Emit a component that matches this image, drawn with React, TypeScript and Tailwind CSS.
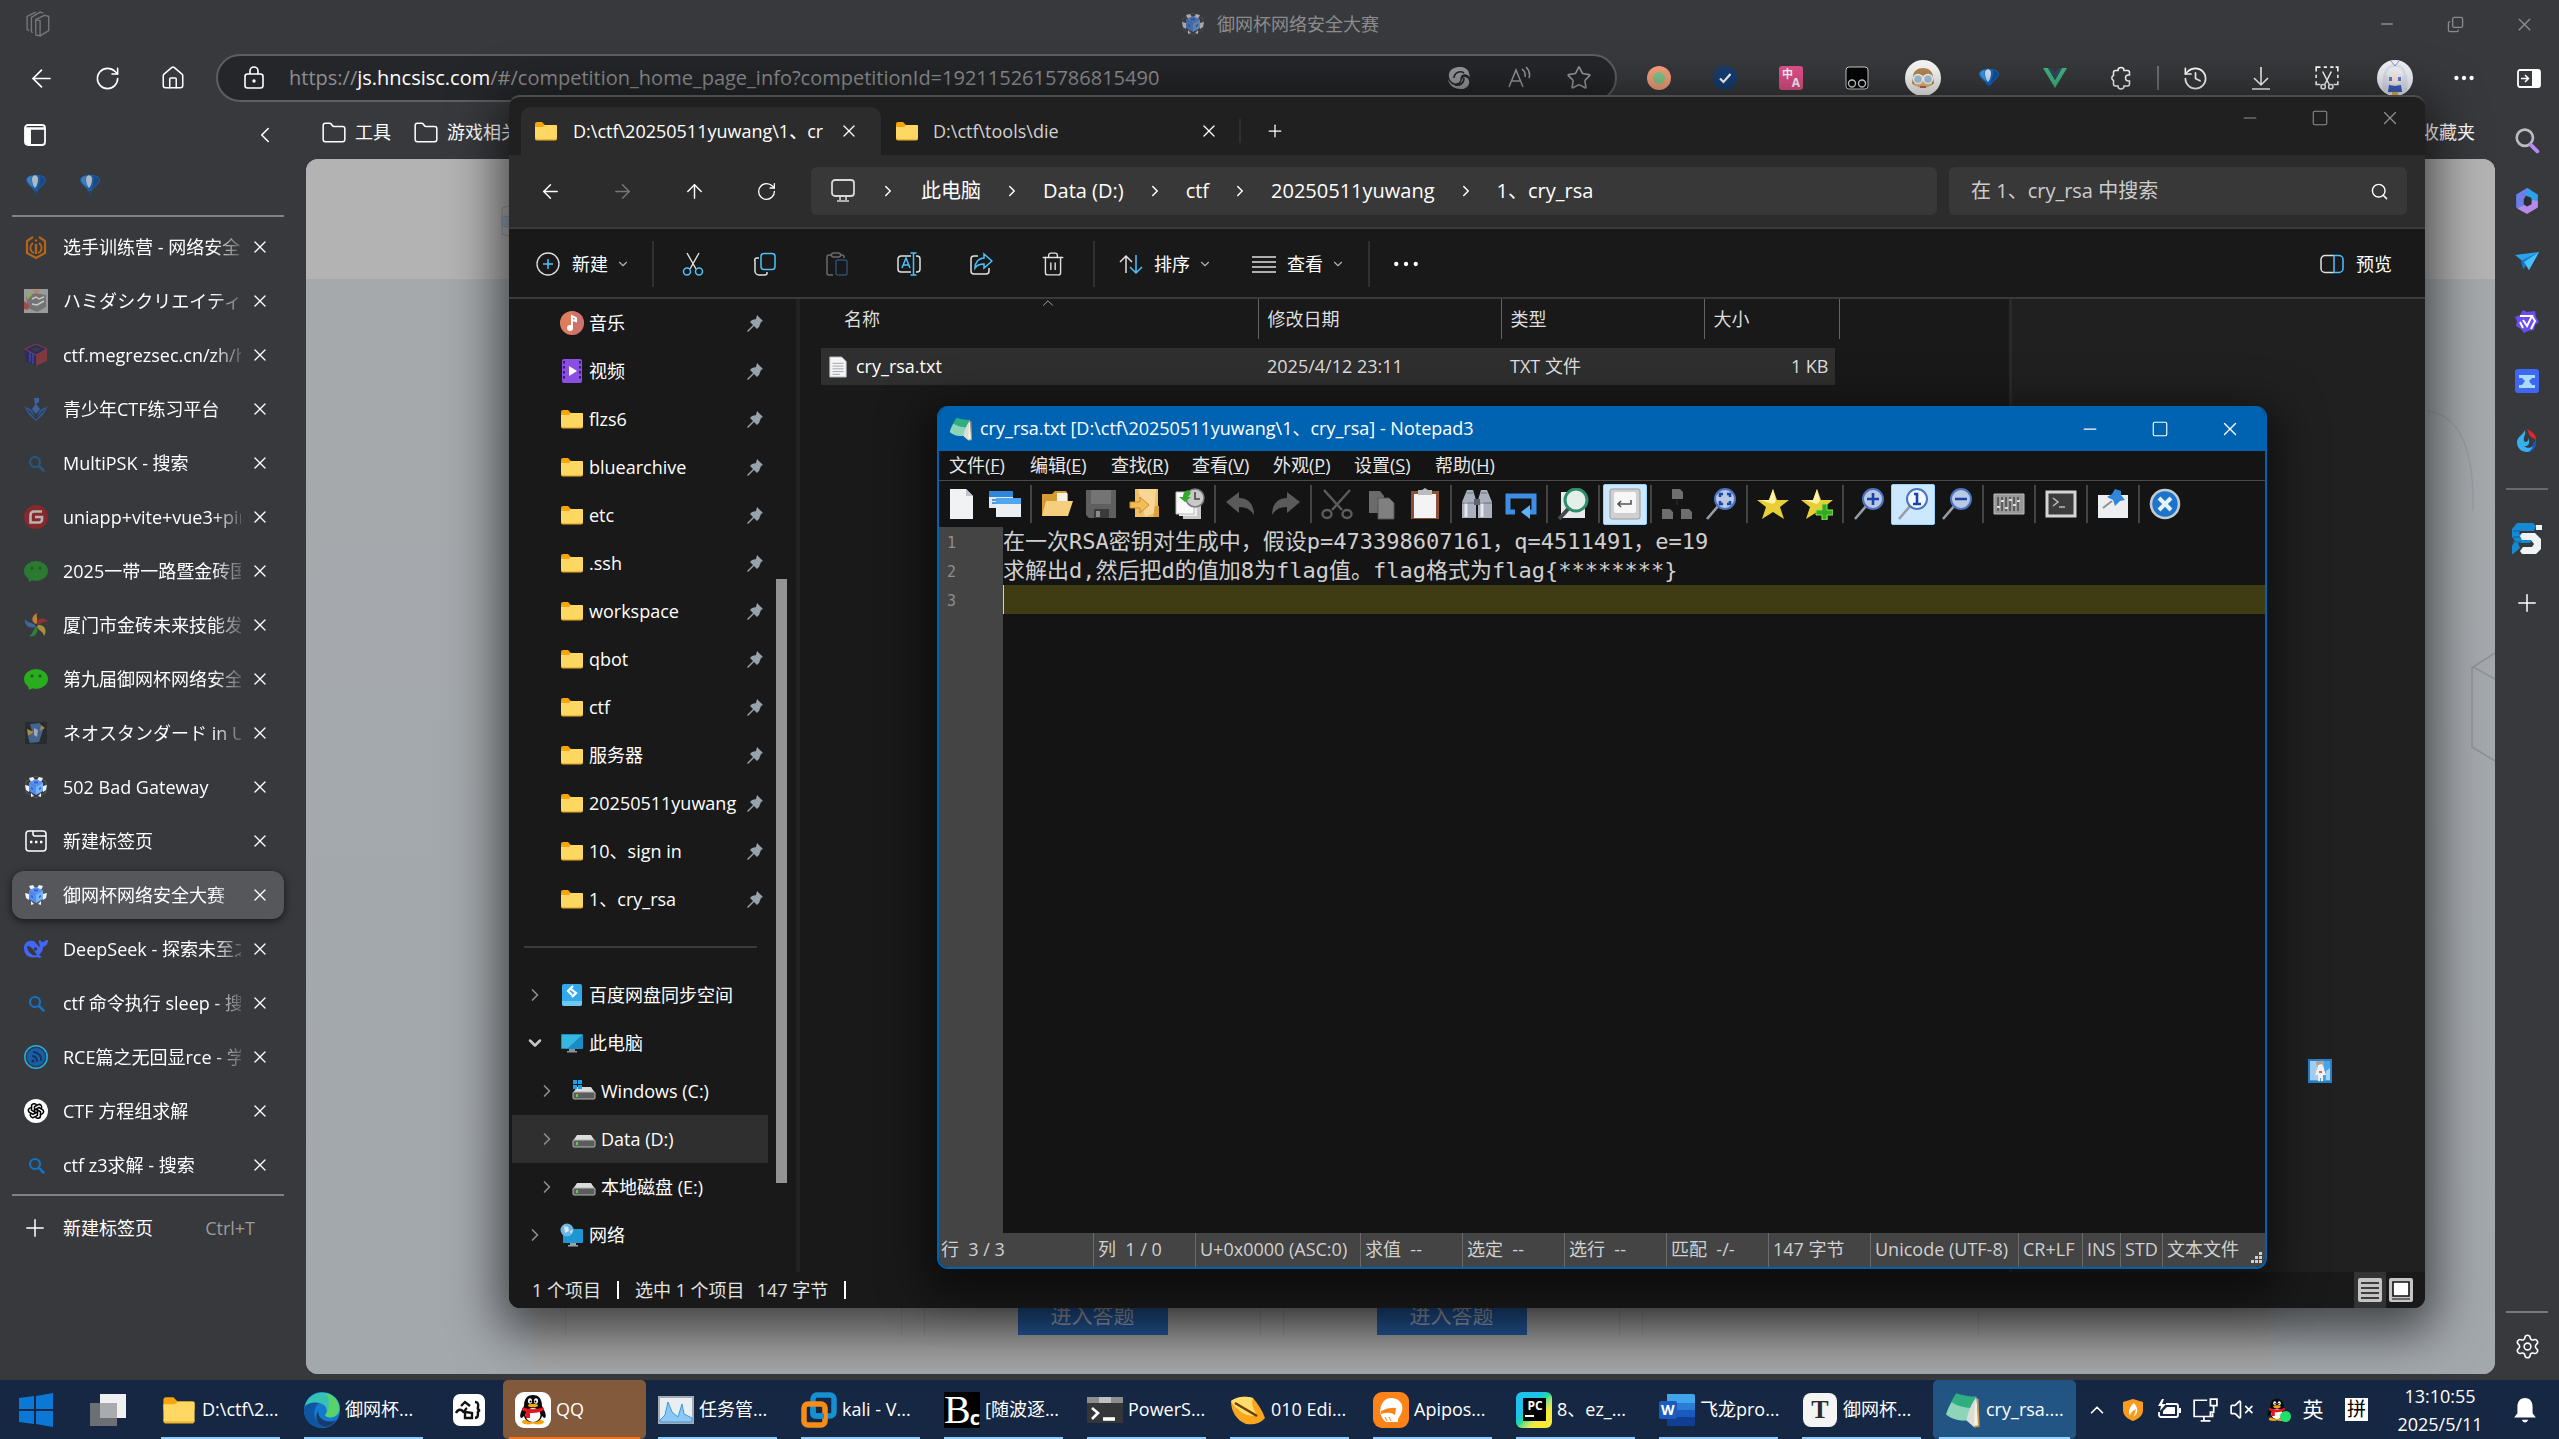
import type { ReactNode } from 'react'
import {
  ArrowLeft,
  ArrowRight,
  ArrowUp,
  ChevronDown,
  ChevronLeft,
  ChevronRight,
  ChevronUp,
  Copy,
  Ellipsis,
  Folder,
  History,
  House,
  Minus,
  Plus,
  RotateCw,
  Search,
  Settings,
  Square,
  Star,
  Trash2,
  VolumeX,
  X,
} from 'lucide-react'
import { TbBrandOpenai } from 'react-icons/tb'

const UI = "font-['Open_Sans','Noto_Sans_CJK_SC',sans-serif]"

function Svg({ size = 24, box = 24, children }: { size?: number; box?: number; children: ReactNode }) {
  return (
    <svg width={size} height={size} viewBox={`0 0 ${box} ${box}`} fill="none" className="shrink-0" aria-hidden="true">
      {children}
    </svg>
  )
}

/* ---------- shared icons ---------- */

function FolderIcon({ size = 24 }: { size?: number }) {
  return (
    <Svg size={size}>
      <path d="M1 5a2 2 0 0 1 2-2h5l3 3h10a2 2 0 0 1 2 2v4H1z" fill="#f5a60f" />
      <path d="M1 8h8l2-2h11a1 1 0 0 1 1 1v12a2 2 0 0 1-2 2H3a2 2 0 0 1-2-2z" fill="#ffd864" />
      <path d="M1 18v1.500a2 2 0 0 0 2 2h18a2 2 0 0 0 2-2V18a2 2 0 0 1-2 2H3a2 2 0 0 1-2-2z" fill="#f0b52e" />
    </Svg>
  )
}

function Balloon({ dim = false }: { dim?: boolean }) {
  return (
    <Svg>
      <g opacity={dim ? 0.75 : 1}>
        <path d="M2 8C2 1 22 1 22 8c0 4-6 7-9 12h-2C8 15 2 12 2 8z" fill="#1668c4" />
        <path d="M8 7c0-5 6-5 6 0 0 3-1 7-3 9-2-2-3-6-3-9z" fill="#d5e6f5" />
        <path d="M3 7c1-2 3-3 5-3-1 4 0 8 2 12-3-3-7-5-7-9z" fill="#3f96e6" />
        <path d="M16 4c3 1 5 2 5 4 0 3-5 6-8 10 2-4 4-9 3-14z" fill="#124f96" />
        <path d="M11 19h2v4h-2z" fill="#124c8e" />
      </g>
    </Svg>
  )
}

function CubeLogo({ size = 24 }: { size?: number }) {
  return (
    <Svg size={size}>
      <path d="M12 1l10 5.500v11L12 23 2 17.500v-11z" stroke="#55585f" />
      <path d="M5 3l4-1 2 3-4 2zM19 3l-4-1-2 3 4 2zM1 10l4 1v6l-3-2zM23 10l-4 1v6l3-2zM7 18l3 3-3 1zM17 18l-3 3 3 1z" fill="#eef2f8" />
      <path d="M12 4l7 3.500-7 4-7-4z" fill="#5b93f3" />
      <path d="M5 7.500l7 4V20l-7-4z" fill="#4f8df0" />
      <path d="M19 7.500l-7 4V20l7-4z" fill="#73b4f8" />
      <path d="M10 6.500h4v2h-4zM7 12l2 1v2l-2-1zM15 13l2-1v2l-2 1z" fill="#2f62d8" />
    </Svg>
  )
}

function BingSearch({ color = '#1272c4' }: { color?: string }) {
  return (
    <Svg>
      <circle cx="11" cy="11" r="5" stroke={color} strokeWidth="2.200" />
      <path d="M15 15l4.500 4.500" stroke={color} strokeWidth="2.600" strokeLinecap="round" />
    </Svg>
  )
}

function Wechat({ color }: { color: string }) {
  return (
    <Svg>
      <ellipse cx="12" cy="12" rx="12" ry="10" fill={color} />
      <path d="M4 18l1 5 6-3z" fill={color} />
      <circle cx="8" cy="9" r="1.500" fill="#1e5a25" />
      <circle cx="16" cy="9" r="1.500" fill="#1e5a25" />
    </Svg>
  )
}

function Penguin({ size = 32 }: { size?: number }) {
  return (
    <Svg size={size} box={32}>
      <ellipse cx="11" cy="28" rx="6" ry="2.500" fill="#f5a50a" />
      <ellipse cx="21" cy="28" rx="6" ry="2.500" fill="#f5a50a" />
      <path d="M7 12C7 4 11 1 16 1s9 3 9 11c3 5 5 10 3 12-1 0-2-1-3-2-1 4-4 6-9 6s-8-2-9-6c-1 1-2 2-3 2-2-2 0-7 3-12z" fill="#0b0b0b" />
      <ellipse cx="16" cy="21" rx="7.500" ry="7" fill="#fff" />
      <ellipse cx="13" cy="7" rx="2" ry="2.800" fill="#fff" />
      <ellipse cx="19" cy="7" rx="2" ry="2.800" fill="#fff" />
      <circle cx="13.500" cy="7.500" r="1" fill="#000" />
      <circle cx="18.500" cy="7.500" r="1" fill="#000" />
      <ellipse cx="16" cy="11.500" rx="5" ry="1.800" fill="#f7a80d" />
      <path d="M6 13c6 3 14 3 20 0l1 3c-5 3-10 3-14 3v5H9v-6l-4-2z" fill="#e4161f" />
    </Svg>
  )
}

function Notebook({ size = 24 }: { size?: number }) {
  return (
    <Svg size={size} box={32}>
      <path d="M28 5l2 25-4 1-7-6z" fill="#f3f1e6" />
      <path d="M10 1c6 2 12 3 18 3-5 7-7 13-9 21C12 26 6 24 1 20 3 13 6 7 10 1z" fill="#2fae80" />
      <path d="M6 9c6 4 12 5 19 5-3 4-5 8-6 11C12 26 6 24 1 20 2 16 4 12 6 9z" fill="#8ed4b8" />
      <path d="M28 4c-5 7-7 13-9 21l7 6c0-9 0-18 2-27z" fill="#d9ddd6" />
      <path d="M29 6l1 24-4 1" stroke="#c79a52" strokeWidth="1.500" />
    </Svg>
  )
}

/* ---------- browser ---------- */

const favicons: Record<string, ReactNode> = {
  camp: (
    <Svg>
      <path d="M9 2L3 6v12l9 5 9-5V6l-6-4" stroke="#b3651a" strokeWidth="2.200" />
      <path d="M9 8c-4 3-3 9 1 10M15 8c4 3 3 9-1 10" stroke="#b3651a" strokeWidth="1.800" />
      <path d="M12 9v10M12 4.500v2" stroke="#b3651a" strokeWidth="2.400" />
    </Svg>
  ),
  hami: (
    <Svg>
      <path d="M0 0h24v24H0z" fill="#9b9b9b" />
      <path d="M2 8l9-4 11 2v12l-9 5-9-4z" fill="#747474" />
      <path d="M3 3l5 3-5 5z" fill="#8fae55" />
      <path d="M8 1h8l-3 4z" fill="#c08054" />
      <path d="M0 12l5 4-1 5-4-1z" fill="#a94a4a" />
      <path d="M8 10l4-2 3 2 5-2M8 15l5 1 7-4" stroke="#c8c8c8" strokeWidth="1.500" />
    </Svg>
  ),
  megrez: (
    <Svg>
      <path d="M12 1l11 5v12l-11 5L1 18V6z" fill="#2c2c62" />
      <path d="M12 12l11-6v12l-11 5z" fill="#7c3a3f" />
      <path d="M12 1l11 5-11 6L1 6z" stroke="#883e45" />
      <path d="M6 9v10M9 10v11" stroke="#4545a0" strokeWidth="1.500" />
      <path d="M12 4l6 2-6 3-6-3z" fill="#3a3b3e" />
    </Svg>
  ),
  youth: (
    <Svg>
      <path d="M0 9l8 4 4 9 4-9 8-4-5 9-7 6-7-6z" fill="#33568e" />
      <path d="M10 1h5v4l-3 2 4 5-4 5-4-5 3-4z" fill="#3d63a2" />
      <path d="M4 13l8 9 8-9" stroke="#26324a" />
    </Svg>
  ),
  bingDim: <BingSearch color="#265884" />,
  gitee: (
    <Svg>
      <circle cx="12" cy="12" r="12" fill="#86282c" />
      <path d="M18 6.500H10A3.500 3.500 0 0 0 6.500 10v7.500H15a3 3 0 0 0 3-3V12h-7" stroke="#b9b4b4" strokeWidth="2.600" />
    </Svg>
  ),
  wechatDim: <Wechat color="#2a7a31" />,
  swirl: (
    <Svg>
      <path d="M12 11C7 9 7 3 13 0c-1 3 1 5 0 10z" fill="#bf8136" />
      <path d="M13 11c0-6 7-8 11-2-4-1-6 1-10 3z" fill="#8d3436" />
      <path d="M14 12c6-1 10 5 6 11-1-5-5-5-7-9z" fill="#a9903a" />
      <path d="M13 14c2 6-3 11-8 9 4-2 4-6 7-10z" fill="#357c40" />
      <path d="M11 14C5 16 0 12 1 6c2 4 6 3 10 6z" fill="#3a6a9c" />
    </Svg>
  ),
  wechat: <Wechat color="#2aac1f" />,
  neo: (
    <Svg>
      <path d="M1 1h22v22H1z" fill="#2a2b2d" />
      <path d="M6 3l10-1 3 7-4 12-9 1-2-6 4-6z" fill="#42648f" />
      <path d="M3 8l7 3-6 4zM17 4l4 3-5 3z" fill="#a38b48" />
      <path d="M10 7l4 2-1 7-3-2z" fill="#a3a8b0" />
    </Svg>
  ),
  cube: <CubeLogo />,
  newtab: (
    <Svg>
      <rect x="2" y="2" width="20" height="20" rx="3" stroke="#fff" strokeWidth="1.500" />
      <path d="M9 2v3q0 2 2 2h11" stroke="#fff" strokeWidth="1.500" />
      <path d="M6 13h2.400M11 13h2.400M16 13h2.400" stroke="#fff" strokeWidth="2.400" />
    </Svg>
  ),
  deepseek: (
    <Svg>
      <path
        d="M0 11C0 6 4 3 9 4c1 0 2 0 2 1 0 1 2 1 4 5 1 0 1-2 0-4-1-2 0-3 1-3 1 2 3 3 5 1 1-1 2-1 3-1 0 4-2 6-5 7 0 4-2 6-4 8l3 2c-2 1-4 1-5 0C5 22 0 18 0 11z"
        fill="#4266f5"
      />
      <path d="M3 9c4 0 6 3 10 9-4 2-10-3-10-9z" fill="#38393c" />
      <circle cx="11.500" cy="12" r="1.800" fill="#38393c" />
    </Svg>
  ),
  bing: <BingSearch />,
  rce: (
    <Svg>
      <circle cx="12" cy="12" r="11.200" stroke="#1fb0e8" strokeWidth="1.500" />
      <circle cx="12" cy="12" r="9" fill="#145fae" />
      <circle cx="9" cy="16" r="1.600" fill="#1b3152" />
      <path d="M8 11c3 0 5 2 5 6M9 7c5 0 9 4 8 9" stroke="#1b3152" strokeWidth="1.800" />
    </Svg>
  ),
  openai: (
    <span className="flex size-6 shrink-0 items-center justify-center rounded-full bg-white text-black">
      <TbBrandOpenai size={18} />
    </span>
  ),
}

const tabs = [
  { icon: 'camp', title: '选手训练营 - 网络安全' },
  { icon: 'hami', title: 'ハミダシクリエイティ' },
  { icon: 'megrez', title: 'ctf.megrezsec.cn/zh/ho' },
  { icon: 'youth', title: '青少年CTF练习平台' },
  { icon: 'bingDim', title: 'MultiPSK - 搜索' },
  { icon: 'gitee', title: 'uniapp+vite+vue3+pin' },
  { icon: 'wechatDim', title: '2025一带一路暨金砖国' },
  { icon: 'swirl', title: '厦门市金砖未来技能发' },
  { icon: 'wechat', title: '第九届御网杯网络安全' },
  { icon: 'neo', title: 'ネオスタンダード in U' },
  { icon: 'cube', title: '502 Bad Gateway' },
  { icon: 'newtab', title: '新建标签页' },
  { icon: 'cube', title: '御网杯网络安全大赛', active: true },
  { icon: 'deepseek', title: 'DeepSeek - 探索未至之' },
  { icon: 'bing', title: 'ctf 命令执行 sleep - 搜' },
  { icon: 'rce', title: 'RCE篇之无回显rce - 学' },
  { icon: 'openai', title: 'CTF 方程组求解' },
  { icon: 'bing', title: 'ctf z3求解 - 搜索' },
]

const extensions: { name: string; icon: ReactNode }[] = [
  {
    name: 'FeHelper',
    icon: (
      <Svg>
        <circle cx="12" cy="12" r="12" fill="#f7a27c" />
        <circle cx="12" cy="12" r="6" fill="#84c98d" />
      </Svg>
    ),
  },
  {
    name: 'Todo',
    icon: (
      <Svg>
        <circle cx="12" cy="12" r="12" fill="#173f74" />
        <path d="M7 12.500l3.500 3.500 7-8" stroke="#fff" strokeWidth="2.200" />
      </Svg>
    ),
  },
  {
    name: '翻译',
    icon: (
      <span className="relative size-6 rounded-[3px] bg-[#e4508c] text-white">
        <span className="absolute left-[3px] top-[1px] text-[11px] font-bold leading-[13px]">中</span>
        <span className="absolute bottom-[1px] right-[3px] text-[12px] font-bold leading-[12px]">A</span>
      </span>
    ),
  },
  {
    name: 'Tampermonkey',
    icon: (
      <Svg>
        <rect x="1" y="1" width="22" height="22" rx="3" fill="#050505" stroke="#d0d0d0" />
        <circle cx="7" cy="17.500" r="3.500" stroke="#d8d8d8" strokeWidth="1.400" />
        <circle cx="17" cy="17.500" r="3.500" stroke="#d8d8d8" strokeWidth="1.400" />
      </Svg>
    ),
  },
  {
    name: '篡改猴',
    icon: (
      <Svg size={36} box={36}>
        <circle cx="18" cy="18" r="18" fill="#fbfbfa" />
        <path d="M8 17c0-12 20-12 20 0l1 6c-3 5-19 5-22 0z" fill="#b98a54" />
        <path d="M9 15h18v9c-2 5-16 5-18 0z" fill="#efb883" />
        <circle cx="13" cy="19" r="4.500" fill="#a7cbe0" stroke="#fff" strokeWidth="1.500" />
        <circle cx="23" cy="19" r="4.500" fill="#a7cbe0" stroke="#fff" strokeWidth="1.500" />
        <path d="M15 27h6" stroke="#a4483a" strokeWidth="1.500" />
      </Svg>
    ),
  },
  { name: 'Balloon', icon: <Balloon /> },
  {
    name: 'Vue Devtools',
    icon: (
      <Svg>
        <path d="M0 2h5l7 12 7-12h5L12 22z" fill="#41b883" />
        <path d="M5 2h4l3 5 3-5h4l-7 12z" fill="#35495e" />
      </Svg>
    ),
  },
  {
    name: '扩展',
    icon: (
      <Svg>
        <path
          d="M9 4.500a3 3 0 0 1 6 0h3.500a2 2 0 0 1 2 2V9h-1a3 3 0 0 0 0 6h1v3a2 2 0 0 1-2 2H15a3 3 0 0 1-6 0H6.500a2 2 0 0 1-2-2v-3.500a2.700 2.700 0 0 1 0-5V6.500a2 2 0 0 1 2-2z"
          stroke="#fff"
          strokeWidth="1.500"
        />
      </Svg>
    ),
  },
]

const sideApps: { name: string; icon: ReactNode }[] = [
  {
    name: '搜索',
    icon: (
      <Svg size={26}>
        <circle cx="10" cy="9" r="7.500" stroke="#b9bcc0" strokeWidth="2.400" />
        <path d="M15.500 15.500l6 6" stroke="#b78af2" strokeWidth="3.600" strokeLinecap="round" />
      </Svg>
    ),
  },
  {
    name: 'Microsoft 365',
    icon: (
      <Svg size={26}>
        <path d="M12 0l4 2-6 6v8l-3 5-5-3V6z" fill="#6c7ee8" />
        <path d="M12 0l10 6v11l-6-3V9l-5-2z" fill="#2ea1ea" />
        <path d="M22 12v6l-10 6-9-5 6-3 7-1 1-4z" fill="#b58bea" />
        <path d="M12 8l4 2v5l-4 2-3-2v-5z" fill="#2b2d33" />
      </Svg>
    ),
  },
  {
    name: 'Drop',
    icon: (
      <Svg>
        <path d="M0 6l24-3-10 18-4-7z" fill="#2aa3ee" />
        <path d="M24 3L6 12l2 8 5-5z" fill="#1479c4" />
        <path d="M24 3L9 13l5 8z" fill="#49c0f8" />
      </Svg>
    ),
  },
  {
    name: '通义',
    icon: (
      <Svg>
        <path d="M8 1l4 2 8-1 1 6 3 5-4 3-1 5-6 1-4 2-3-4-5-3 1-5-2-4 5-2z" fill="#6a4df0" />
        <path d="M5 7h12l-5 10-4-6M17 7l3 5-4 8M5 13l3 6" stroke="#fff" strokeWidth="2" />
      </Svg>
    ),
  },
  {
    name: '讯飞',
    icon: (
      <Svg>
        <rect width="24" height="24" rx="3" fill="#3e68f2" />
        <path d="M4 6h16v3h-3l-3 3 3 4h3v3H4v-3h3l3-4-3-3H4z" fill="#a9dcfb" />
      </Svg>
    ),
  },
  {
    name: 'Flame',
    icon: (
      <Svg>
        <path d="M10 1c1 5-2 7-1 11 1 2 5 1 4-3 3 5 0 9-4 8 6 5 12-1 11-7 2 7-2 13-8 13S2 19 2 13c0-5 6-7 8-12z" fill="#35b1f2" />
        <path d="M12 0c6 3 9 6 9 11l-6-4z" fill="#e3262b" />
        <path d="M21 12c1 6-3 11-8 11 4-2 5-5 5-10z" fill="#1a53be" />
      </Svg>
    ),
  },
]

function IconCell({ label, wide = false, children }: { label: string; wide?: boolean; children: ReactNode }) {
  return (
    <button type="button" aria-label={label} className={`flex h-12 shrink-0 items-center justify-center ${wide ? 'w-[69px]' : 'w-[66px]'}`}>
      {children}
    </button>
  )
}

function BrowserTitle() {
  return (
    <header className="flex h-12 shrink-0 items-center text-[#8b8c8e]">
      <button type="button" aria-label="工作区" className="flex w-[78px] items-center justify-center">
        <Svg size={26}>
          <path d="M9 8l8-4 4 1v13l-8 5-4-1zM9 8l4 1v14M6 20l-1-1V6l8-5 3 1M3 18l-2-1V5l8-4" stroke="#75767a" strokeWidth="1.300" />
        </Svg>
      </button>
      <div className="flex flex-1 items-center justify-center gap-3 pl-[130px] text-[18px]">
        <span className="opacity-60">
          <CubeLogo />
        </span>
        <h1>御网杯网络安全大赛</h1>
      </div>
      <IconCell label="最小化" wide>
        <Minus size={18} strokeWidth={2} />
      </IconCell>
      <IconCell label="还原" wide>
        <Copy size={17} strokeWidth={1.800} className="-scale-y-100" />
      </IconCell>
      <IconCell label="关闭" wide>
        <X size={21} strokeWidth={1.600} />
      </IconCell>
    </header>
  )
}

function BrowserToolbar() {
  return (
    <div className="flex h-[60px] shrink-0 items-center pl-2 text-white">
      <IconCell label="后退">
        <ArrowLeft size={29} strokeWidth={1.400} />
      </IconCell>
      <IconCell label="刷新">
        <RotateCw size={27} strokeWidth={1.400} />
      </IconCell>
      <IconCell label="主页">
        <House size={26} strokeWidth={1.400} />
      </IconCell>
      <div className="ml-[10px] flex h-12 min-w-0 flex-1 items-center rounded-full border-2 border-[#5d5e61] bg-[#252629] pl-6 pr-[6px]">
        <Svg size={24}>
          <rect x="3" y="8" width="18" height="14" rx="2.500" stroke="#fff" strokeWidth="1.600" />
          <path d="M8 8V5a4 4 0 0 1 8 0v3" stroke="#fff" strokeWidth="1.600" />
          <circle cx="12" cy="15" r="1.700" fill="#fff" />
        </Svg>
        <div role="textbox" aria-label="地址" className="ml-[23px] flex-1 truncate text-[20px] text-[#8d8e90]">
          https://<span className="text-white">js.hncsisc.com</span>
          /#/competition_home_page_info?competitionId=1921152615786815490
        </div>
        <button type="button" aria-label="应用" className="flex w-[60px] justify-center">
          <Svg>
            <path d="M2 8C3 0 20-2 22 7l1 5c-1-3-5-5-8-3-3 3 0 6-4 8C6 19 1 14 2 8z" fill="#97989b" />
            <path d="M1 13c2 4 5 7 10 6 5-2 2-7 7-8 7 2 5 12-4 12-6 0-12-3-13-10z" fill="#97989b" />
            <path d="M7 12c0-5 6-8 10-5M17 12c0 5-4 8-9 7" stroke="#252629" strokeWidth="1.600" />
          </Svg>
        </button>
        <button type="button" aria-label="朗读" className="flex w-[60px] justify-center">
          <Svg>
            <path d="M2 21L9 4l7 17M4.500 15h9M15 3q4 3 3 8M19 1q5 5 3 11" stroke="#97989b" strokeWidth="1.500" />
          </Svg>
        </button>
        <button type="button" aria-label="收藏" className="flex w-[60px] justify-center text-[#97989b]">
          <Star size={26} strokeWidth={1.500} />
        </button>
      </div>
      <div className="ml-[9px] flex items-center">
        {extensions.map((ext) => (
          <IconCell key={ext.name} label={ext.name}>
            {ext.icon}
          </IconCell>
        ))}
        <span className="mx-[3px] h-6 w-[2px] bg-[#707174]" />
        <IconCell label="历史记录">
          <History size={27} strokeWidth={1.500} />
        </IconCell>
        <IconCell label="下载">
          <Svg>
            <path d="M12 1v17M5 12l7 7 7-7M3 23h18" stroke="#fff" strokeWidth="1.500" />
          </Svg>
        </IconCell>
        <IconCell label="截图">
          <Svg size={26}>
            <path d="M2 6V2h4M9 2h3M15 2h3M22 6V2h-2M22 9v3M22 15v3h-4M2 9v3M2 15v3h4" stroke="#fff" strokeWidth="1.500" />
            <path d="M8 6l6 12M16 6l-6 12" stroke="#fff" strokeWidth="1.400" />
            <circle cx="8.500" cy="20" r="2" stroke="#fff" strokeWidth="1.400" />
            <circle cx="15.500" cy="20" r="2" stroke="#fff" strokeWidth="1.400" />
          </Svg>
        </IconCell>
        <IconCell label="个人资料" wide>
          <Svg size={36} box={36}>
            <circle cx="18" cy="18" r="18" fill="#f3f4fa" />
            <path d="M6 30C4 18 7 4 18 4s14 14 12 26l-6 4H12z" fill="#dfe4f3" />
            <path d="M11 15c0-6 14-6 14 0v5c-2 6-12 6-14 0z" fill="#fdf0ec" />
            <path d="M9 17c1-9 5-10 9-10s8 1 9 10l-4-5-2 4-3-5-3 5-2-4z" fill="#f3f5fc" />
            <path d="M12 17h3v4h-3zM21 17h3v4h-3z" fill="#5d83cf" />
            <path d="M14 1l4 5M22 1l-4 5" stroke="#8d9bb8" />
            <path d="M12 25l6 1 6-1 1 7H11z" fill="#3f62c0" />
            <path d="M15 32h6v3h-6z" fill="#e5b44c" />
          </Svg>
        </IconCell>
        <IconCell label="设置及其他" wide>
          <Ellipsis size={26} strokeWidth={2} />
        </IconCell>
        <button type="button" aria-label="侧栏" className="flex w-[61px] justify-center">
          <Svg>
            <rect x="1" y="4" width="22" height="17" rx="2" stroke="#fff" strokeWidth="1.800" />
            <path d="M15 4h8v17h-8z" fill="#fff" />
            <path d="M4 12.500h7M8 9l3.500 3.500L8 16" stroke="#fff" strokeWidth="1.500" />
          </Svg>
        </button>
      </div>
    </div>
  )
}

function TabSidebar() {
  return (
    <aside className="flex w-[306px] shrink-0 flex-col pl-3 pr-[22px] text-[18px] text-white">
      <div className="flex h-[53px] items-center justify-between pl-[11px] pr-[6px]">
        <button type="button" aria-label="垂直标签页">
          <Svg>
            <rect x="2" y="2" width="20" height="20" rx="3" stroke="#fff" strokeWidth="1.800" />
            <path d="M2 5.500h20" stroke="#fff" strokeWidth="2.500" />
            <path d="M2 6h6v16H2z" fill="#fff" />
          </Svg>
        </button>
        <button type="button" aria-label="折叠窗格">
          <ChevronLeft size={26} strokeWidth={1.500} />
        </button>
      </div>
      <div className="flex h-[46px] items-center gap-[30px] pl-3">
        <Balloon dim />
        <Balloon dim />
      </div>
      <div className="mt-2 h-[2px] bg-[#818285]" />
      <ul className="mt-[3px]">
        {tabs.map((tab) => (
          <li key={tab.title} className="flex h-[54px] items-center">
            <div
              className={
                tab.active
                  ? 'flex h-12 w-full items-center rounded-[12px] bg-[#56575b] px-3 shadow-[0_2px_8px_rgba(0,0,0,0.6)]'
                  : 'flex h-12 w-full items-center px-3'
              }
            >
              {favicons[tab.icon]}
              <a
                href="#tab"
                className="ml-[15px] w-[178px] overflow-hidden whitespace-nowrap [mask-image:linear-gradient(to_right,black_84%,transparent_104%)]"
              >
                {tab.title}
              </a>
              <button type="button" aria-label="关闭标签页" className="ml-auto mr-[2px]">
                <X size={20} strokeWidth={1.600} />
              </button>
            </div>
          </li>
        ))}
      </ul>
      <div className="mt-[2px] h-[2px] bg-[#818285]" />
      <button type="button" className="flex h-[64px] items-center pl-[9px] pr-[29px]">
        <Plus size={28} strokeWidth={1.300} />
        <span className="ml-[14px]">新建标签页</span>
        <span className="ml-auto text-[#9a9b9d]">Ctrl+T</span>
      </button>
    </aside>
  )
}

function BookmarkBar() {
  return (
    <div className="flex h-[51px] shrink-0 items-center gap-[22px] pb-[2px] pl-[15px] pr-5 text-[18px] text-white">
      <a href="#tools" className="flex items-center gap-2">
        <Folder size={26} strokeWidth={1.400} />
        工具
      </a>
      <a href="#games" className="flex items-center gap-2">
        <Folder size={26} strokeWidth={1.400} />
        游戏相关
      </a>
      <a href="#others" className="ml-auto">
        其他收藏夹
      </a>
    </div>
  )
}

function WebPage() {
  const cards = ['', '进入答题', '进入答题', '']
  return (
    <main className="relative mb-[6px] flex flex-1 flex-col overflow-hidden rounded-xl bg-[#a3a7aa]">
      <div className="h-[120px] bg-[#b3b3b3]" />
      <div className="flex flex-1 flex-col justify-end bg-linear-to-b from-[#a5a9ac] to-[#a3a8ad]">
        <div className="mx-[225px] mb-[7px] flex h-[200px] items-start gap-[22px] bg-[#a6a6a6] px-[34px] pb-8">
          {cards.map((text, i) => (
            <div key={i} className="flex h-full w-[337px] flex-col items-center justify-end border-x border-[#9a9a9a]">
              {text && (
                <button type="button" className="h-[46px] w-[150px] bg-[#255ba0] pt-[6px] text-[21px] leading-8 text-[#aab4c0]">
                  {text}
                </button>
              )}
            </div>
          ))}
        </div>
      </div>
      {/* faint line art near the right edge */}
      <svg className="absolute right-0 top-[240px] h-[400px] w-[70px]" viewBox="0 0 70 400" fill="none" stroke="#8d9299" strokeWidth="1.500" aria-hidden="true">
        <path d="M2 12q48 5 46 100" opacity="0.500" />
        <path d="M70 254l-22 14 22 12M47 268v80l23 14" />
      </svg>
      <svg className="absolute left-[194px] top-[40px]" width="30" height="44" fill="none" stroke="#8d98a8" aria-hidden="true">
        <path d="M30 1L2 9v26l28 8" />
        <path d="M2 17l28 2v14L2 27z" fill="#9ba7b8" />
      </svg>
    </main>
  )
}

function SideRail() {
  return (
    <aside className="flex w-[64px] shrink-0 flex-col items-center text-white">
      <div className="flex flex-col items-center pt-[3px]">
        {sideApps.map((app) => (
          <button key={app.name} type="button" aria-label={app.name} className="flex h-[60px] w-12 items-center justify-center">
            {app.icon}
          </button>
        ))}
      </div>
      <div className="mt-[17px] h-[2px] w-[42px] bg-[#68696c]" />
      <button type="button" aria-label="S" className="mt-[33px]">
        <Svg size={32} box={32}>
          <path d="M6 0h16l3 3-2 5H9l-1 3h12l3 3-4 6H7l2 5-7 6H1v-8l3-5-3-4V6z" fill="#168ad0" />
          <path d="M2 8h7M2 14h18M2 19h8" stroke="#0f6cab" strokeWidth="1.500" />
          <path d="M11 10h13l6 6v10l-5 5H11l-2-3 3-4h9l2-3-3-4h-9l-2-4zM25 2h6v5h-6z" fill="#f1f4f7" />
        </Svg>
      </button>
      <button type="button" aria-label="添加" className="mt-[34px]">
        <Plus size={28} strokeWidth={1.300} />
      </button>
      <div className="mt-auto h-[2px] w-[42px] bg-[#77787b]" />
      <button type="button" aria-label="设置" className="mb-5 mt-5">
        <Settings size={27} strokeWidth={1.400} />
      </button>
    </aside>
  )
}

/* ---------- file explorer ---------- */

function PinIcon() {
  return (
    <Svg size={18} box={18}>
      <path d="M11 1l6 6-2 1-2 5-2 2-3-3-6 6-1-1 6-6-3-3 2-2 4-1z" fill="#98a2aa" />
    </Svg>
  )
}

function DriveIcon({ windows = false }: { windows?: boolean }) {
  return (
    <Svg>
      <path d="M5 8h14l4 6H1z" fill="#dcdcdc" />
      <rect x="1" y="13" width="22" height="7" rx="1" fill="#5c5c5c" stroke="#b5b5b5" />
      <path d="M4 15h2v3H4z" fill="#57d43a" />
      {windows && <path d="M1 1h4v4H1zM6 1h4v4H6zM1 6h4v4H1zM6 6h4v4H6z" fill="#1ba1e8" />}
    </Svg>
  )
}

function PcIcon() {
  return (
    <Svg>
      <rect x="1" y="3" width="22" height="15" rx="1" fill="#1a8cc4" />
      <path d="M2 4h20L8 17H2z" fill="#35b7df" />
      <path d="M9 18h6v2H9zM7 20h10v1.500H7z" fill="#8b9299" />
    </Svg>
  )
}

const quickAccess = ['音乐', '视频', 'flzs6', 'bluearchive', 'etc', '.ssh', 'workspace', 'qbot', 'ctf', '服务器', '20250511yuwang', '10、sign in', '1、cry_rsa']

function quickIcon(name: string) {
  if (name === '音乐')
    return (
      <Svg>
        <circle cx="12" cy="12" r="12" fill="#dd7d5b" />
        <path d="M12 0a12 12 0 0 1 0 24z" fill="#c56a78" opacity="0.600" />
        <path d="M12 17V5l4 2v3l-3-1" stroke="#fff" strokeWidth="2" />
        <circle cx="10" cy="17" r="3" fill="#fff" />
      </Svg>
    )
  if (name === '视频')
    return (
      <Svg>
        <rect x="2" y="0" width="20" height="24" rx="2" fill="#8a4fe0" />
        <path d="M4 2v20M20 2v20" stroke="#3b1d78" strokeWidth="2" strokeDasharray="2.500 2.500" />
        <path d="M9 7l8 5-8 5z" fill="#fff" />
      </Svg>
    )
  return <FolderIcon />
}

const places: { name: string; icon: ReactNode; depth?: boolean; open?: boolean; selected?: boolean }[] = [
  {
    name: '百度网盘同步空间',
    icon: (
      <Svg>
        <rect x="2" y="1" width="20" height="22" rx="2" fill="#32a9ea" />
        <path d="M2 18h20v3a2 2 0 0 1-2 2H4a2 2 0 0 1-2-2z" fill="#6ec8f5" />
        <path d="M13 3L8 8l4 4M11 6l5 4-4 4" stroke="#fff" strokeWidth="2.200" />
      </Svg>
    ),
  },
  { name: '此电脑', icon: <PcIcon />, open: true },
  { name: 'Windows (C:)', icon: <DriveIcon windows />, depth: true },
  { name: 'Data (D:)', icon: <DriveIcon />, depth: true, selected: true },
  { name: '本地磁盘 (E:)', icon: <DriveIcon />, depth: true },
  {
    name: '网络',
    icon: (
      <Svg>
        <rect x="3" y="6" width="20" height="14" rx="1" fill="#1d97d2" />
        <path d="M10 20h6v2h-6zM8 22h10v1.500H8z" fill="#9aa1a7" />
        <circle cx="7" cy="7" r="6.500" fill="#6cb6e6" />
        <path d="M4 3l4 1 1 4-4 2zM10 8l3-1-2 4z" fill="#d7e9f4" />
      </Svg>
    ),
  },
]

function ExplorerTree() {
  return (
    <nav className="flex w-[291px] shrink-0 overflow-hidden border-r-4 border-[#222222] text-[18px] text-white">
      <div className="min-w-0 flex-1 pl-[3px]">
        {quickAccess.map((name) => (
          <button key={name} type="button" className="flex h-12 w-full items-center pl-12 text-left">
            {quickIcon(name)}
            <span className="ml-[5px] whitespace-nowrap">{name}</span>
            <span className="ml-auto w-[22px] shrink-0">
              <PinIcon />
            </span>
          </button>
        ))}
        <div className="flex h-12 items-center pl-3 pr-[11px]">
          <div className="h-[2px] w-full bg-[#3a3a3a]" />
        </div>
        {places.map((place) => (
          <button
            key={place.name}
            type="button"
            className={`flex h-12 w-full items-center text-left ${place.depth ? 'pl-[25px]' : 'pl-[13px]'} ${place.selected ? 'bg-[#2f2f2f]' : ''}`}
          >
            <span className="flex w-[35px] text-[#8e8e8e]">
              {place.open ? <ChevronDown size={20} strokeWidth={3} className="text-[#c8c8c8]" /> : <ChevronRight size={20} strokeWidth={2} />}
            </span>
            {place.icon}
            <span className="ml-[5px] whitespace-nowrap">{place.name}</span>
          </button>
        ))}
        <div className="flex h-12 pl-[58px] pt-4">
          <span className="size-3 rounded-full bg-[#050505]" />
        </div>
      </div>
      <div className="w-[28px] pl-2 pt-[280px]">
        <div className="h-[604px] w-[11px] bg-[#939393]" />
      </div>
    </nav>
  )
}

function Sep() {
  return <span className="h-[46px] w-[2px] shrink-0 bg-[#303030]" />
}

function Cmd({ label, children }: { label: string; children: ReactNode }) {
  return (
    <button type="button" aria-label={label} className="flex h-12 w-[72px] shrink-0 items-center justify-center">
      {children}
    </button>
  )
}

function ExplorerCommands() {
  const white = '#e0e0e0'
  const blue = '#4cc2ff'
  return (
    <div className="flex h-[70px] shrink-0 items-center border-b-2 border-[#3a3a3a] bg-[#191919] pt-[2px] text-[18px] text-white">
      <button type="button" className="flex w-[143px] items-center pl-[27px]">
        <Svg>
          <circle cx="12" cy="12" r="11" stroke={white} strokeWidth="1.300" />
          <path d="M12 7v10M7 12h10" stroke={blue} strokeWidth="1.500" />
        </Svg>
        <span className="ml-3">新建</span>
        <ChevronDown size={14} className="ml-2 text-[#b0b0b0]" />
      </button>
      <Sep />
      <div className="flex pl-[3px]">
        <Cmd label="剪切">
          <Svg>
            <path d="M6 1l9 16M18 1L9 17" stroke={white} strokeWidth="1.400" />
            <circle cx="6" cy="19.500" r="3.500" stroke={blue} strokeWidth="1.500" />
            <circle cx="18" cy="19.500" r="3.500" stroke={blue} strokeWidth="1.500" />
          </Svg>
        </Cmd>
        <Cmd label="复制">
          <Svg>
            <path d="M6 6H4a2 2 0 0 0-2 3v10a4 4 0 0 0 4 4h6a2 2 0 0 0 2-2v-1" stroke={white} strokeWidth="1.500" />
            <rect x="8" y="1.500" width="14" height="16" rx="3" stroke={blue} strokeWidth="1.500" />
          </Svg>
        </Cmd>
        <Cmd label="粘贴">
          <Svg>
            <path d="M7 3H4a2 2 0 0 0-2 2v16a2 2 0 0 0 2 2h4M15 3h2a2 2 0 0 1 2 2v1" stroke="#6a6a6a" strokeWidth="1.500" />
            <rect x="6.500" y="1" width="9" height="4" rx="2" stroke="#6a6a6a" strokeWidth="1.500" />
            <rect x="11" y="8" width="11" height="15" rx="2" stroke="#2a4d70" strokeWidth="1.500" />
          </Svg>
        </Cmd>
        <Cmd label="重命名">
          <Svg>
            <path d="M14 4H4a3 3 0 0 0-3 3v10a3 3 0 0 0 3 3h10M19 4h1a3 3 0 0 1 3 3v10a3 3 0 0 1-3 3h-1" stroke={white} strokeWidth="1.500" />
            <path d="M16.500 1v22M13.500 1h6M13.500 23h6M5 16l4-10 4 10M6.500 13h5" stroke={blue} strokeWidth="1.500" />
          </Svg>
        </Cmd>
        <Cmd label="共享">
          <Svg>
            <path d="M9 4H5a3 3 0 0 0-3 3v12a3 3 0 0 0 3 3h12a3 3 0 0 0 3-3v-3" stroke={white} strokeWidth="1.500" />
            <path d="M15 2l8 7-8 7v-4c-4 0-7 1-9 4 0-6 4-10 9-10z" stroke={blue} strokeWidth="1.500" />
          </Svg>
        </Cmd>
        <Cmd label="删除">
          <Trash2 size={26} strokeWidth={1.300} className="text-[#e0e0e0]" />
        </Cmd>
      </div>
      <span className="ml-1" />
      <Sep />
      <button type="button" className="ml-6 flex items-center">
        <Svg>
          <path d="M7 21V4M1 10l6-6 6 6" stroke={white} strokeWidth="1.500" />
          <path d="M17 3v18M11 15l6 6 6-6" stroke={blue} strokeWidth="1.500" />
        </Svg>
        <span className="ml-[11px]">排序</span>
        <ChevronDown size={14} className="ml-2 text-[#b0b0b0]" />
      </button>
      <button type="button" className="ml-[40px] flex items-center">
        <Svg>
          <path d="M0 5h24M0 10h24M0 15h24M0 20h24" stroke={white} strokeWidth="1.400" />
        </Svg>
        <span className="ml-[11px]">查看</span>
        <ChevronDown size={14} className="ml-2 mr-[23px] text-[#b0b0b0]" />
      </button>
      <Sep />
      <Cmd label="更多">
        <Svg size={26}>
          <path d="M3 12h.01M12 12h.01M21 12h.01" stroke="#fff" strokeWidth="4" strokeLinecap="round" />
        </Svg>
      </Cmd>
      <button type="button" className="ml-auto mr-[33px] flex items-center gap-3">
        <Svg>
          <path d="M14 3.500H5a4 4 0 0 0-4 4v9a4 4 0 0 0 4 4h9" stroke={white} strokeWidth="1.500" />
          <path d="M14 3.500h5a4 4 0 0 1 4 4v9a4 4 0 0 1-4 4h-5z" stroke={blue} strokeWidth="1.500" />
        </Svg>
        预览
      </button>
    </div>
  )
}

function Explorer() {
  const crumbs = ['此电脑', 'Data (D:)', 'ctf', '20250511yuwang', '1、cry_rsa']
  return (
    <section className="absolute bottom-[131px] left-[509px] right-[134px] top-[95px] flex flex-col overflow-hidden rounded-[11px] border-t-2 border-[#4b4b4b] bg-[#202020] shadow-[0_14px_50px_10px_rgba(0,0,0,0.6)]">
      <div className="flex h-[58px] shrink-0 items-end text-white">
        <div className="ml-3 flex h-[48px] w-[360px] items-center rounded-t-[10px] bg-[#2c2c2c] pl-[13px] pr-[22px] text-[18px]">
          <FolderIcon />
          <span className="ml-[15px] w-[250px] overflow-hidden whitespace-nowrap font-medium">D:\ctf\20250511yuwang\1、cry</span>
          <button type="button" aria-label="关闭标签页" className="ml-auto">
            <X size={20} strokeWidth={1.500} />
          </button>
        </div>
        <div className="flex h-[48px] w-[360px] items-center pl-[14px] text-[18px] text-[#d0d0d0]">
          <FolderIcon />
          <span className="ml-[14px]">D:\ctf\tools\die</span>
          <button type="button" aria-label="关闭标签页" className="ml-auto mr-[20px] text-white">
            <X size={20} strokeWidth={1.500} />
          </button>
          <span className="h-6 w-[2px] bg-[#303030]" />
        </div>
        <button type="button" aria-label="新建标签页" className="flex h-[48px] w-[68px] items-center justify-center">
          <Plus size={20} strokeWidth={1.500} />
        </button>
        <div className="ml-auto flex h-[58px] items-start pt-[7px] text-[#8f8f8f]">
          {[Minus, Square, X].map((Icon, i) => (
            <button key={i} type="button" aria-label={['最小化', '最大化', '关闭'][i]} className="flex h-7 w-[70px] items-center justify-center">
              <Icon size={[20, 18, 22][i]} strokeWidth={1.400} />
            </button>
          ))}
        </div>
      </div>
      <div className="flex h-[74px] shrink-0 items-center border-b-2 border-[#3a3a3a] bg-[#2c2c2c] pl-[5px] pr-[18px] text-[20px] text-white">
        <Cmd label="后退">
          <ArrowLeft size={23} strokeWidth={1.500} />
        </Cmd>
        <Cmd label="前进">
          <ArrowRight size={23} strokeWidth={1.500} className="text-[#777]" />
        </Cmd>
        <Cmd label="向上">
          <ArrowUp size={23} strokeWidth={1.500} />
        </Cmd>
        <Cmd label="刷新">
          <RotateCw size={21} strokeWidth={1.500} />
        </Cmd>
        <div className="ml-[9px] flex h-12 min-w-0 flex-1 items-center rounded-md bg-[#383838] pl-5">
          <Svg size={24}>
            <rect x="1" y="1" width="22" height="16" rx="3" stroke="#d8d8d8" strokeWidth="1.800" />
            <path d="M9 17v4M15 17v4M6 22h12" stroke="#d8d8d8" strokeWidth="1.600" />
          </Svg>
          {crumbs.map((crumb, i) => (
            <span key={crumb} className="flex items-center">
              <ChevronRight size={18} strokeWidth={2} className={i === 0 ? 'mx-6' : 'mx-[22px]'} />
              <a href="#path">{crumb}</a>
            </span>
          ))}
        </div>
        <label className="ml-3 flex h-12 w-[458px] items-center rounded-md bg-[#383838] pl-[22px] pr-[18px]">
          <input aria-label="搜索" placeholder="在 1、cry_rsa 中搜索" className="min-w-0 flex-1 bg-transparent outline-none placeholder:text-[#cccccc]" />
          <Search size={19} strokeWidth={1.800} />
        </label>
      </div>
      <ExplorerCommands />
      <div className="flex min-h-0 flex-1 bg-[#191919]">
        <ExplorerTree />
        <div className="relative min-w-0 flex-1 pl-[21px]">
          <ChevronUp size={18} strokeWidth={1.200} className="absolute left-[239px] top-[-5px] text-[#b0b0b0]" />
          <table className="w-[1018px] table-fixed border-collapse text-left text-[18px] text-[#dedede]">
            <thead>
              <tr className="h-10">
                <th className="w-[437px] border-r border-[#636363] pl-[23px] font-normal">名称</th>
                <th className="w-[243px] border-r border-[#636363] pl-[9px] font-normal">修改日期</th>
                <th className="w-[203px] border-r border-[#636363] pl-[9px] font-normal">类型</th>
                <th className="w-[135px] border-r border-[#636363] pl-[9px] font-normal">大小</th>
              </tr>
            </thead>
            <tbody>
              <tr className="h-[9px]" />
              <tr className="h-[37px] bg-[#2f2f2f]">
                <td className="text-white">
                  <span className="flex items-center gap-[7px] pl-[6px]">
                    <Svg size={22}>
                      <path d="M3 1h13l5 5v17H3z" fill="#f5f5f5" stroke="#aaa" />
                      <path d="M6 8h12M6 11h12M6 14h12M6 17h12M6 20h8" stroke="#9aa0a6" />
                    </Svg>
                    cry_rsa.txt
                  </span>
                </td>
                <td className="pl-[9px]">2025/4/12 23:11</td>
                <td className="pl-[9px]">TXT 文件</td>
                <td className="border-r-[9px] border-[#191919] pr-[6px] text-right">1 KB</td>
              </tr>
            </tbody>
          </table>
        </div>
        <div className="relative w-[416px] shrink-0 border-l-[3px] border-[#2a2a2a] bg-[#202020]">
          <span className="absolute right-[93px] top-[760px]">
            <Svg>
              <path d="M0 0h24v24H0z" fill="#4aa5e8" />
              <path d="M2 2h8v19H2zM18 12l4-3v12h-4z" fill="#a6d4f6" />
              <path d="M8 3c1-3 7-3 8 0v7l2 6h-3v7h-2v-4h-1v4h-2v-7H7l2-6z" fill="#f6f4f2" />
              <path d="M8 3c1-3 7-3 8 0v6l-2-4-4 1-1 4z" fill="#a9a8a6" />
              <path d="M11 12h3v2h-3z" fill="#d46a6a" />
              <path d="M1 1h22v22H1z" stroke="#1e75c0" strokeWidth="1.500" />
            </Svg>
          </span>
        </div>
      </div>
      <footer className="flex h-9 shrink-0 items-center bg-[#191919] pl-[23px] pr-3 text-[18px] text-[#e2e2e2]">
        <span>1 个项目</span>
        <span className="mx-4 h-[18px] w-[2px] bg-white" />
        <span>选中 1 个项目</span>
        <span className="ml-3">147 字节</span>
        <span className="ml-4 h-[18px] w-[2px] bg-white" />
        <button type="button" aria-label="详细信息" className="ml-auto flex h-9 w-8 items-center justify-center bg-[#333]">
          <Svg>
            <rect width="24" height="24" rx="2" fill="#c4c4c4" />
            <path d="M3 5h18M3 10h18M3 15h18M3 20h18" stroke="#111" strokeWidth="1.400" />
          </Svg>
        </button>
        <button type="button" aria-label="大图标" className="ml-[3px]">
          <Svg>
            <rect width="24" height="24" rx="2" fill="#c4c4c4" />
            <path d="M4 4h16v14H4z" fill="#fff" stroke="#111" strokeWidth="1.600" />
            <path d="M3 21h18" stroke="#111" />
          </Svg>
        </button>
      </footer>
    </section>
  )
}

/* ---------- Notepad3 ---------- */

function Glass({ mark, bg = '#b9c9e4' }: { mark: string; bg?: string }) {
  return (
    <Svg size={32} box={32}>
      <path d="M14 17L2 31" stroke="#989da6" strokeWidth="2.600" />
      <circle cx="20" cy="11" r="10" fill={bg} stroke="#4d74c0" strokeWidth="2" />
      <path d={mark} stroke="#1b44a8" strokeWidth="2.600" />
    </Svg>
  )
}

function StarIcon({ plus = false }: { plus?: boolean }) {
  return (
    <Svg size={32} box={32}>
      <path d="M16 1l4 11h12l-9 7 4 12-11-7-11 7 4-12-9-7h12z" fill="#e8cf35" />
      <path d="M16 1l3 12-3 3-13-4h9z" fill="#fff2a8" />
      {plus && <path d="M21 16h5v6h6v5h-6v5h-5v-5h-6v-5h6z" fill="#2fae22" stroke="#9ade55" />}
    </Svg>
  )
}

type Tool = { name: string; icon: ReactNode; on?: boolean }

const toolGroups: Tool[][] = [
  [
    {
      name: '新建',
      icon: (
        <Svg size={32} box={32}>
          <path d="M5 1h16l7 7v23H5z" fill="#f1f2f3" />
          <path d="M21 1v7h7z" fill="#bfc4ca" />
        </Svg>
      ),
    },
    {
      name: '新建窗口',
      icon: (
        <Svg size={32} box={32}>
          <path d="M0 3h24v17H0z" fill="#dfe9f3" />
          <path d="M0 3h24v6H0z" fill="#2f86d8" />
          <path d="M3 12h8M3 15h6" stroke="#5b95d0" strokeWidth="2" />
          <path d="M7 10h25v19H7z" fill="#eceff2" />
          <path d="M7 10h25v6H7z" fill="#4fa6ee" />
        </Svg>
      ),
    },
  ],
  [
    {
      name: '打开',
      icon: (
        <Svg size={32} box={32}>
          <path d="M1 6h10l3-3h11l2 3v22H1z" fill="#d49b35" />
          <path d="M16 5h10v8H16z" fill="#f5f2ea" />
          <path d="M5 13h27l-5 15H1z" fill="#f6cf7c" />
        </Svg>
      ),
    },
    {
      name: '保存',
      icon: (
        <Svg size={32} box={32}>
          <path d="M1 2h30v28H4l-3-3z" fill="#5f5f5f" />
          <path d="M6 2h20v14H6z" fill="#747474" />
          <path d="M9 21h15v9H9z" fill="#3b3b3b" />
          <path d="M11 23h4v6h-4z" fill="#8a8a8a" />
        </Svg>
      ),
    },
    {
      name: '退出',
      icon: (
        <Svg size={32} box={32}>
          <path d="M6 1h23v28H6z" fill="#f0bf66" />
          <path d="M9 1h18l-2 24-9 4z" fill="#f8d796" />
          <path d="M1 14h10v-5l9 8-9 8v-5H1z" fill="#f4bd56" stroke="#c98d2a" />
          <path d="M26 18h4v11h-6z" fill="#dca03f" />
        </Svg>
      ),
    },
    {
      name: '恢复',
      icon: (
        <Svg size={32} box={32}>
          <path d="M10 8h18v23H10z" fill="#c9c9c9" />
          <path d="M6 6h18v22H6z" fill="#ededed" />
          <path d="M3 4h18v22H3z" fill="#fafafa" stroke="#bbb" />
          <circle cx="22" cy="10" r="9" fill="#c7cac7" stroke="#777" strokeWidth="1.500" />
          <path d="M22 4v7h5" stroke="#444" strokeWidth="1.600" />
          <path d="M15 2l3 3-3 4h3l-6 5-6-5h4c0-4 2-6 5-7z" fill="#30ad28" />
        </Svg>
      ),
    },
  ],
  [
    {
      name: '撤销',
      icon: (
        <Svg size={32} box={32}>
          <path d="M1 14L14 4v6c9 0 15 6 15 17-4-6-8-8-15-8v6z" fill="#5a5a5a" />
        </Svg>
      ),
    },
    {
      name: '重做',
      icon: (
        <Svg size={32} box={32}>
          <path d="M31 14L18 4v6C9 10 3 16 3 27c4-6 8-8 15-8v6z" fill="#5a5a5a" />
        </Svg>
      ),
    },
  ],
  [
    {
      name: '剪切',
      icon: (
        <Svg size={32} box={32}>
          <path d="M3 2l18 20M29 2L11 22" stroke="#5c5c5c" strokeWidth="2.400" />
          <ellipse cx="6" cy="26" rx="4.500" ry="4" stroke="#5c5c5c" strokeWidth="2.400" />
          <ellipse cx="26" cy="26" rx="4.500" ry="4" stroke="#5c5c5c" strokeWidth="2.400" />
        </Svg>
      ),
    },
    {
      name: '复制',
      icon: (
        <Svg size={32} box={32}>
          <path d="M4 3h11l4 5v17H4z" fill="#6b6b6b" />
          <path d="M13 10h11l5 5v16H13z" fill="#808080" stroke="#555" />
        </Svg>
      ),
    },
    {
      name: '粘贴',
      icon: (
        <Svg size={32} box={32}>
          <path d="M2 3h28v28H2z" fill="#8e4f35" />
          <path d="M5 6h22v24H5z" fill="#f3f4f5" />
          <path d="M9 2h4l3-2 3 2h4v5H9z" fill="#b9bdc2" />
        </Svg>
      ),
    },
  ],
  [
    {
      name: '查找',
      icon: (
        <Svg size={32} box={32}>
          <path d="M6 2h6l3 10v18H1V14z" fill="#a9b0bc" />
          <path d="M26 2h-6l-3 10v18h14V14z" fill="#a9b0bc" />
          <path d="M5 14v15M21 14v15" stroke="#e4e7eb" strokeWidth="3" />
          <path d="M1 15h14M17 15h14M6 5h6M20 5h6" stroke="#667082" />
          <path d="M13 11h6v6h-6z" fill="#5b6474" />
        </Svg>
      ),
    },
    {
      name: '替换',
      icon: (
        <Svg size={32} box={32}>
          <path d="M10 24H3V8h26v16h-6" stroke="#3c8fe4" strokeWidth="5" />
          <path d="M25 17v14l-9-7z" fill="#5fb0f5" />
        </Svg>
      ),
    },
  ],
  [
    {
      name: '高亮',
      icon: (
        <Svg size={32} box={32}>
          <path d="M4 4h20l4 4v22H4z" fill="#e8eaec" />
          <path d="M12 20L2 31" stroke="#44484c" strokeWidth="4" />
          <circle cx="19" cy="12" r="11" fill="#e3efe8" stroke="#2c8f6a" strokeWidth="3" />
        </Svg>
      ),
    },
  ],
  [
    {
      name: '自动换行',
      on: true,
      icon: (
        <Svg size={32} box={32}>
          <rect x="1" y="1" width="30" height="30" rx="2" fill="#d0d0d0" stroke="#9a9a9a" />
          <rect x="5" y="4" width="22" height="21" rx="2" fill="#f7f7f7" />
          <path d="M22 12v4H9M12 13l-3 3 3 3" stroke="#555" strokeWidth="1.600" />
        </Svg>
      ),
    },
  ],
  [
    {
      name: '折叠',
      icon: (
        <Svg size={32} box={32}>
          <path d="M11 1h8l3 3v7H11zM1 21h8l3 3v7H1zM20 21h8l3 3v7H20z" fill="#6e6e6e" />
          <path d="M16 12v5" stroke="#333" />
        </Svg>
      ),
    },
    { name: '全屏', icon: <Glass mark="M18 6h-3v3M22 6h3v3M18 16h-3v-3M22 16h3v-3" /> },
  ],
  [
    { name: '收藏夹', icon: <StarIcon /> },
    { name: '添加收藏', icon: <StarIcon plus /> },
  ],
  [
    { name: '放大', icon: <Glass mark="M14 11h12M20 5v12" /> },
    { name: '重置缩放', on: true, icon: <Glass bg="#f2f7ff" mark="M17 6h3v10M16 16h8" /> },
    { name: '缩小', icon: <Glass mark="M14 11h12" /> },
  ],
  [
    {
      name: '方案',
      icon: (
        <Svg size={32} box={32}>
          <path d="M1 6h30v20H1z" fill="#999" stroke="#bbb" />
          <path d="M5 9v14M9 9v14M13 9v14M17 9v14M21 9v14M25 9v14" stroke="#444" strokeWidth="1.400" />
          <path d="M4 19h3M8 13h3M12 20h3M16 12h3M20 17h3M24 13h3" stroke="#ddd" strokeWidth="2" />
        </Svg>
      ),
    },
  ],
  [
    {
      name: '命令',
      icon: (
        <Svg size={32} box={32}>
          <path d="M2 4h28v24H2z" fill="#3c3c3c" stroke="#d5d5d5" strokeWidth="3" />
          <path d="M8 10l5 4-5 4M14 19h6" stroke="#b8b8b8" strokeWidth="1.600" />
        </Svg>
      ),
    },
  ],
  [
    {
      name: '置顶',
      icon: (
        <Svg size={32} box={32}>
          <path d="M1 7h30v23H1z" fill="#eceef0" />
          <path d="M15 13L6 20" stroke="#8d9298" strokeWidth="2" />
          <path d="M18 1l6 2v4l4 5-5 1-5 5-2-6-6-3 5-3z" fill="#3288d8" />
        </Svg>
      ),
    },
  ],
  [
    {
      name: '关闭',
      icon: (
        <Svg size={32} box={32}>
          <circle cx="16" cy="16" r="14" fill="#1d74cc" stroke="#c4cad1" strokeWidth="2.600" />
          <path d="M10 10l12 12M22 10L10 22" stroke="#e8f2fb" strokeWidth="4" />
        </Svg>
      ),
    },
  ],
]

const menus = [
  ['文件', 'F'],
  ['编辑', 'E'],
  ['查找', 'R'],
  ['查看', 'V'],
  ['外观', 'P'],
  ['设置', 'S'],
  ['帮助', 'H'],
]

const statusCells = [
  ['行  3 / 3', 'w-[155px]'],
  ['列  1 / 0', 'w-[102px]'],
  ['U+0x0000 (ASC:0)', 'w-[165px]'],
  ['求值  --', 'w-[102px]'],
  ['选定  --', 'w-[102px]'],
  ['选行  --', 'w-[102px]'],
  ['匹配  -/-', 'w-[102px]'],
  ['147 字节', 'w-[102px]'],
  ['Unicode (UTF-8)', 'w-[148px]'],
  ['CR+LF', 'w-[64px]'],
  ['INS', 'w-[38px]'],
  ['STD', 'w-[42px]'],
  ['文本文件', 'flex-1'],
]

const TEXT = '在一次RSA密钥对生成中，假设p=473398607161，q=4511491，e=19\n求解出d,然后把d的值加8为flag值。flag格式为flag{********}\n'

function Notepad() {
  return (
    <section className="absolute bottom-[170px] left-[937px] right-[292px] top-[406px] flex flex-col overflow-hidden rounded-[11px] border-2 border-t-0 border-[#0063b1] bg-[#141414] text-[18px] shadow-[0_14px_44px_14px_rgba(0,0,0,0.5)]">
      <header className="flex h-[45px] shrink-0 items-center bg-[#0063b1] pl-[10px] text-white">
        <Notebook />
        <h2 className="ml-[7px]">cry_rsa.txt [D:\ctf\20250511yuwang\1、cry_rsa] - Notepad3</h2>
        <div className="ml-auto flex">
          {[Minus, Square, X].map((Icon, i) => (
            <button key={i} type="button" aria-label={['最小化', '最大化', '关闭'][i]} className="flex h-10 w-[70px] items-center justify-center">
              <Icon size={[20, 18, 22][i]} strokeWidth={1.500} />
            </button>
          ))}
        </div>
      </header>
      <div className="flex h-[30px] shrink-0 items-center border-b border-[#4a4a4a] pl-[10px] text-[#e8e8e8]">
        {menus.map(([name, key]) => (
          <button key={name} type="button" className="w-[81px] text-left">
            {name}(<u>{key}</u>)
          </button>
        ))}
      </div>
      <div className="flex h-[46px] shrink-0 items-center">
        {toolGroups.map((group, i) => (
          <div key={i} className="flex items-center">
            {i > 0 && <span className="mx-[3px] h-[38px] w-[2px] bg-[#454545]" />}
            {group.map((tool) => (
              <button
                key={tool.name}
                type="button"
                aria-label={tool.name}
                className={`flex h-[41px] w-11 items-center justify-center rounded-[2px] ${tool.on ? 'border border-[#99d1ff] bg-[#cce8ff]' : ''}`}
              >
                {tool.icon}
              </button>
            ))}
          </div>
        ))}
      </div>
      <div className="flex min-h-0 flex-1">
        <ol className="w-16 shrink-0 bg-[#444444] pl-2 pt-[2px] font-['DejaVu_Sans_Mono',monospace] text-[15px] leading-[29px] text-[#8f8f8f]">
          <li>1</li>
          <li>2</li>
          <li>3</li>
        </ol>
        <div className="relative flex min-w-0 flex-1">
          <textarea
            aria-label="编辑器"
            readOnly
            value={TEXT}
            className="min-w-0 flex-1 resize-none overflow-hidden border-0 bg-[linear-gradient(#3f3c14,#3f3c14)] bg-[size:100%_29px] bg-[position:0_58px] bg-no-repeat font-['DejaVu_Sans_Mono','Noto_Sans_CJK_SC',monospace] text-[22px] leading-[29px] text-[#d0d0d0] outline-none"
          />
          <span className="absolute left-0 top-[58px] h-[29px] w-px bg-[#d0d0d0]" />
        </div>
      </div>
      <footer className="flex h-[34px] shrink-0 items-center whitespace-pre bg-[#444444] text-[#d0d0d0]">
        {statusCells.map(([text, width], i) => (
          <span key={text} className={`flex h-full shrink-0 items-center pb-[2px] ${i === 0 ? 'pl-[2px]' : 'pl-1'} ${width} ${i < 12 ? 'border-r border-[#6a6a6a]' : ''}`}>
            {text}
            {i === 12 && (
              <span className="ml-auto mt-auto">
                <Svg size={14} box={14}>
                  <path d="M8 1h3v3H8zM4 5h3v3H4zM8 5h3v3H8zM0 9h3v3H0zM4 9h3v3H4zM8 9h3v3H8z" fill="#d0d0d0" />
                </Svg>
              </span>
            )}
          </span>
        ))}
      </footer>
    </section>
  )
}

/* ---------- taskbar ---------- */

const apps: { name: string; icon: ReactNode; kind?: 'alert' | 'focus' | 'iconOnly' }[] = [
  { name: 'D:\\ctf\\2...', icon: <FolderIcon size={34} /> },
  {
    name: '御网杯...',
    icon: (
      <Svg size={36} box={36}>
        <circle cx="18" cy="18" r="18" fill="#1478cc" />
        <path d="M1 14C4 2 16-2 26 2c9 4 12 14 8 20-4 5-12 4-13 1 4-4 1-11-6-12C8 10 3 12 1 14z" fill="#35c1b4" />
        <path d="M22 1c10 3 15 12 12 20-4 6-12 5-13 2 5-5 5-15 1-22z" fill="#63d655" opacity="0.800" />
        <path d="M15 11c-8 6-6 20 6 24C10 38 0 30 0 18c1-6 8-9 15-7z" fill="#0f559f" />
        <path d="M14 19c0 9 10 13 18 9-3 4-7 7-11 7-7-2-11-8-7-16z" fill="#183a6e" />
      </Svg>
    ),
  },
  {
    name: '计',
    kind: 'iconOnly',
    icon: (
      <Svg size={32} box={32}>
        <rect width="32" height="32" rx="7" fill="#fff" />
        <path d="M3 19q2-4 5-3t2 3M8 12l4-4 5 4M14 14q-3 2-2 6v4h7v-5l-6-1M22 8q4 0 3 5-1 3 2 3-3 1-2 4 0 4-3 4" stroke="#111" strokeWidth="2.400" />
      </Svg>
    ),
  },
  {
    name: 'QQ',
    kind: 'alert',
    icon: (
      <span className="flex size-9 items-center justify-center rounded-[9px] bg-white">
        <Penguin />
      </span>
    ),
  },
  {
    name: '任务管...',
    icon: (
      <Svg size={36} box={36}>
        <path d="M1 5h34v26H1z" fill="#e8eef2" stroke="#a7abb5" strokeWidth="2" />
        <path d="M2 28l5-5 3-13 4 10 6 5 4-13 2 10 8 4v4H2z" fill="#8cc8f2" stroke="#3b9adf" />
      </Svg>
    ),
  },
  {
    name: 'kali - V...',
    icon: (
      <Svg size={36} box={36}>
        <rect x="12" y="3" width="21" height="21" rx="4" stroke="#168fd3" strokeWidth="5.500" />
        <rect x="3" y="12" width="21" height="21" rx="4" stroke="#f78d16" strokeWidth="5.500" />
        <path d="M12 15v6q0 3 3 3h8" stroke="#168fd3" strokeWidth="5.500" />
      </Svg>
    ),
  },
  {
    name: '[随波逐...',
    icon: (
      <span className="relative size-9 overflow-hidden bg-black text-white">
        <span className="absolute left-0 top-0 font-['Liberation_Serif',serif] text-[40px] leading-9">B</span>
        <span className="absolute bottom-0 right-0 text-[20px] font-bold leading-5">c</span>
      </span>
    ),
  },
  {
    name: 'PowerS...',
    icon: (
      <Svg size={36} box={36}>
        <path d="M0 5h36v26H0z" fill="#343638" />
        <path d="M0 5h36v6H0z" fill="#8c8e90" />
        <path d="M12 5h12v6H12z" fill="#bfc0c2" />
        <path d="M5 16l6 5-6 6" stroke="#fff" strokeWidth="2.600" />
        <path d="M16 27h12" stroke="#fff" strokeWidth="3.600" />
      </Svg>
    ),
  },
  {
    name: '010 Edi...',
    icon: (
      <Svg size={36} box={36}>
        <path d="M1 9C8 4 16 4 23 6c5 6 9 12 12 20-5 6-12 7-19 6C6 28 1 19 1 9z" fill="#f7a61e" />
        <path d="M1 9C8 4 16 4 23 6c-2 5 0 11 4 17-8 2-14-1-18-5-4-3-6-5-8-9z" fill="#ffdc6b" />
        <path d="M5 11l22 13" stroke="#6b3a08" strokeWidth="2.400" />
      </Svg>
    ),
  },
  {
    name: 'Apipos...',
    icon: (
      <Svg size={36} box={36}>
        <rect width="36" height="36" rx="9" fill="#fb8318" />
        <path d="M18 6c8 0 13 6 11 13-1 5-5 7-4 11H13C8 26 6 20 8 14c2-5 5-8 10-8z" fill="#fff" />
        <path d="M8 19q8-4 15-3l-1 7q-5-4-14-1z" fill="#fb8318" />
        <path d="M12 25l2 4M16 25l2 4" stroke="#fb8318" />
      </Svg>
    ),
  },
  {
    name: '8、ez_...',
    icon: (
      <span className="relative flex size-9 items-center justify-center overflow-hidden rounded-[6px] bg-linear-to-br from-[#1fc1ef] from-35% via-[#2bdc90] via-50% to-[#f5ea3a] to-70%">
        <span className="flex size-[23px] flex-col bg-black pl-[2px] pt-[1px] text-[12px] font-bold leading-[13px] text-white">
          PC
          <span className="mt-[3px] h-[2px] w-[9px] bg-white" />
        </span>
      </span>
    ),
  },
  {
    name: '飞龙pro...',
    icon: (
      <span className="relative size-9">
        <Svg size={36} box={36}>
          <path d="M8 2h26a2 2 0 0 1 2 2v7H8z" fill="#41a5ee" />
          <path d="M8 11h28v7H8z" fill="#2b7cd3" />
          <path d="M8 18h28v7H8z" fill="#185abd" />
          <path d="M8 25h28v7a2 2 0 0 1-2 2H8z" fill="#103f91" />
          <rect y="9" width="18" height="18" rx="2" fill="#1b5bbf" />
        </Svg>
        <span className="absolute left-[2px] top-[9px] text-[14px] font-bold leading-[18px] text-white">W</span>
      </span>
    ),
  },
  {
    name: '御网杯...',
    icon: (
      <span className="flex size-[34px] items-center justify-center rounded-[8px] bg-[#f4f4f4] font-['Liberation_Serif',serif] text-[26px] font-bold text-[#2b2b2b]">T</span>
    ),
  },
  { name: 'cry_rsa....', kind: 'focus', icon: <Notebook size={36} /> },
]

function Tray() {
  return (
    <div className="ml-auto flex items-center text-white">
      <button type="button" aria-label="显示隐藏的图标" className="flex w-9 justify-center">
        <ChevronUp size={22} strokeWidth={1.800} />
      </button>
      <span className="flex w-9 justify-center">
        <Svg>
          <path d="M12 1l10 3v8c0 6-5 9-10 11C7 21 2 18 2 12V4z" fill="#f99b1c" />
          <path d="M13 5c-5 4-6 9-4 13 0-3 2-5 6-7-1 3-1 6-3 8 5-3 6-8 1-14z" fill="#fff" />
        </Svg>
      </span>
      <span className="flex w-9 justify-center">
        <Svg>
          <path d="M9 6h10a2 2 0 0 1 2 2v9a2 2 0 0 1-2 2H4a2 2 0 0 1-2-2v-3" stroke="#fff" strokeWidth="1.800" />
          <path d="M10 9h8v7H6v-3zM22 10h2v5h-2z" fill="#fff" />
          <path d="M5 1L1 8h3l-1 5 6-7H5l2-5z" fill="#fff" />
        </Svg>
      </span>
      <span className="flex w-9 justify-center">
        <Svg size={26}>
          <path d="M14 3H2v15h17v-3M8 22h9M11 18v4M17 2h6v6h-6zM20 8v6h-3v4" stroke="#fff" strokeWidth="1.600" />
        </Svg>
      </span>
      <span className="flex w-9 justify-center">
        <VolumeX size={25} strokeWidth={1.600} />
      </span>
      <span className="relative flex w-9 justify-center">
        <Penguin size={24} />
        <span className="absolute bottom-0 right-1 size-[11px] rounded-full bg-[#1fe06b]" />
      </span>
      <button type="button" className="w-9 text-[21px]">
        英
      </button>
      <button type="button" className="ml-[14px] flex size-[23px] items-center justify-center bg-white text-[19px] text-black">
        拼
      </button>
      <time className="ml-6 w-[96px] text-center text-[18px] leading-[28px]">
        13:10:55
        <br />
        2025/5/11
      </time>
      <button type="button" aria-label="通知" className="ml-6 mr-[21px]">
        <Svg size={26}>
          <path d="M12 1c5 0 7 4 7 8v6l3 4H2l3-4V9c0-4 2-8 7-8z" fill="#fff" />
          <path d="M9 21h6q-1 2.500-3 2.500T9 21z" fill="#fff" />
        </Svg>
      </button>
    </div>
  )
}

function Taskbar() {
  return (
    <footer className="flex h-[59px] shrink-0 items-stretch bg-[#162744] text-[18px] text-white">
      <button type="button" aria-label="开始" className="flex w-[72px] items-center justify-center">
        <Svg size={34} box={34}>
          <path d="M0 5l15-2v13H0zM17 3l17-3v16H17zM0 18h15v13L0 29zM17 18h17v16l-17-3z" fill="#0a78d4" />
        </Svg>
      </button>
      <button type="button" aria-label="任务视图" className="mr-[5px] flex w-[72px] items-center justify-center">
        <Svg size={36} box={36}>
          <path d="M10 2h26v24H10z" fill="#eef0f2" />
          <path d="M0 11h27v23H0z" fill="#6c6f73" />
          <path d="M10 11h17v15H10z" fill="#a9abad" />
        </Svg>
      </button>
      {apps.map((app, i) =>
        app.kind === 'iconOnly' ? (
          <button key={i} type="button" aria-label={app.name} className="flex w-[68px] items-center justify-center">
            {app.icon}
          </button>
        ) : (
          <button
            key={i}
            type="button"
            className={`relative flex w-[143px] shrink-0 items-center rounded-[5px] pl-3 ${
              app.kind === 'alert' ? 'bg-[#835a3c]' : app.kind === 'focus' ? 'bg-[#225584]' : ''
            }`}
          >
            <span className="flex w-9 justify-center">{app.icon}</span>
            <span className="ml-[5px] whitespace-nowrap">{app.name}</span>
            <span
              className={`absolute bottom-0 h-[2px] ${
                app.kind === 'alert' ? 'inset-x-[6px] bg-[#f97316]' : app.kind === 'focus' ? 'inset-x-[6px] bg-[#99d4ff]' : 'inset-x-3 bg-[#8fcdf8]'
              }`}
            />
          </button>
        ),
      )}
      <Tray />
    </footer>
  )
}

export default function App() {
  return (
    <div className={`relative flex h-screen w-full flex-col overflow-hidden bg-[#38393c] ${UI}`}>
      <BrowserTitle />
      <BrowserToolbar />
      <div className="flex min-h-0 flex-1">
        <TabSidebar />
        <div className="flex min-w-0 flex-1 flex-col">
          <BookmarkBar />
          <WebPage />
        </div>
        <SideRail />
      </div>
      <Taskbar />
      <Explorer />
      <Notepad />
    </div>
  )
}
